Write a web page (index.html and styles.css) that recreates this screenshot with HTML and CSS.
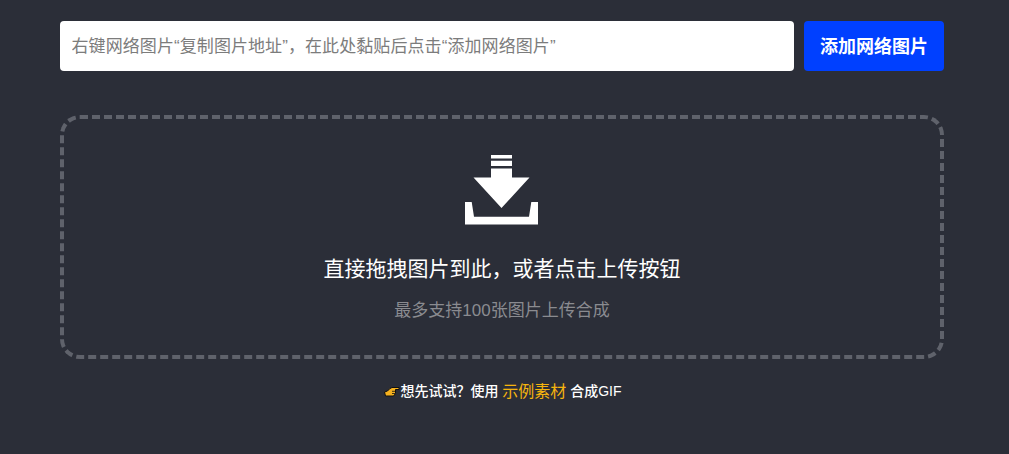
FILE: index.html
```html
<!DOCTYPE html>
<html lang="zh-CN">
<head>
<meta charset="utf-8">
<title>图片合成GIF</title>
<link rel="stylesheet" href="styles.css">
</head>
<body>
<main class="page">
  <form class="url-bar">
    <input class="url-input" type="text" placeholder="右键网络图片“复制图片地址”，在此处黏贴后点击“添加网络图片”">
    <button class="url-btn" type="button">添加网络图片</button>
  </form>
  <section class="drop">
    <svg class="drop-icon" width="73" height="70" viewBox="0 0 73 70" aria-hidden="true">
      <path fill="#fff" d="M26 0h21v3.500H26zM26 5.700h21V11H26zM26 13.500h21v9h17.500L36.500 53 8.500 22.500H26z"/>
      <path fill="#fff" d="M0 47h6.700L9 61.700h55L66.300 47H73v22.500H0z"/>
    </svg>
    <h2 class="drop-title">直接拖拽图片到此，或者点击上传按钮</h2>
    <p class="drop-sub">最多支持100张图片上传合成</p>
  </section>
  <p class="hint">
    <svg class="hint-icon" width="16" height="11" viewBox="0 0 16 11" aria-hidden="true">
      <path fill="#f5b11f" stroke="#111" d="M.500 6 3.500 5 6 2.500 8 1.500h7v2H11.500V7.500L9.500 10H1.500z"/>
      <path fill="none" stroke="#111" stroke-width=".8" d="M8 5.300h3.500M8 7.500h3"/>
    </svg><span>想先试试？使用 </span><a class="hint-link">示例素材</a><span> 合成GIF</span>
  </p>
</main>
</body>
</html>
```
FILE: styles.css
```css
* { box-sizing: border-box; }
html, body { margin: 0; height: 100%; }
body {
  background: #2b2e38;
  font-family: "Liberation Sans", "Noto Sans CJK SC", sans-serif;
  overflow: hidden;
}
.page {
  width: 884px;
  margin-left: 60px;
  padding-top: 21px;
}
.url-bar {
  display: flex;
  gap: 10px;
  height: 50px;
  margin: 0;
}
.url-input {
  flex: 1;
  min-width: 0;
  height: 50px;
  border: 0;
  border-radius: 4px;
  background: #fff;
  padding: 1px 11.5px 0;
  font: 17px "Liberation Sans", "Noto Sans CJK SC", sans-serif;
  letter-spacing: .08px;
  color: #333;
  outline: none;
}
.url-input::placeholder { color: #7c7c7c; opacity: 1; }
.url-btn {
  width: 140px;
  height: 50px;
  border: 0;
  border-radius: 4px;
  background: #0040ff;
  color: #fff;
  font: 700 18px "Liberation Sans", "Noto Sans CJK SC", sans-serif;
  padding: 0 0 2px;
}
.drop {
  height: 244px;
  margin-top: 44px;
  border: 4px dashed #5f626b;
  border-radius: 20px;
  display: flex;
  flex-direction: column;
  align-items: center;
  padding-top: 36px;
}
.drop-icon { display: block; margin-right: 1px; }
.drop-title {
  margin: 29px 0 0;
  font-size: 21px;
  line-height: 30px;
  font-weight: 400;
  color: #fff;
}
.drop-sub {
  margin: 14px 0 0;
  font-size: 17px;
  line-height: 26px;
  color: #8a8b90;
}
.hint {
  margin: 19px 0 0;
  padding-left: 2px;
  height: 24px;
  display: flex;
  align-items: center;
  justify-content: center;
  font-size: 14px;
  font-weight: 500;
  color: #fff;
  white-space: pre;
}
.hint-icon { margin-top: 3px; }
.hint-link {
  font-size: 16px;
  font-weight: 400;
  color: #f6b40e;
}
```
